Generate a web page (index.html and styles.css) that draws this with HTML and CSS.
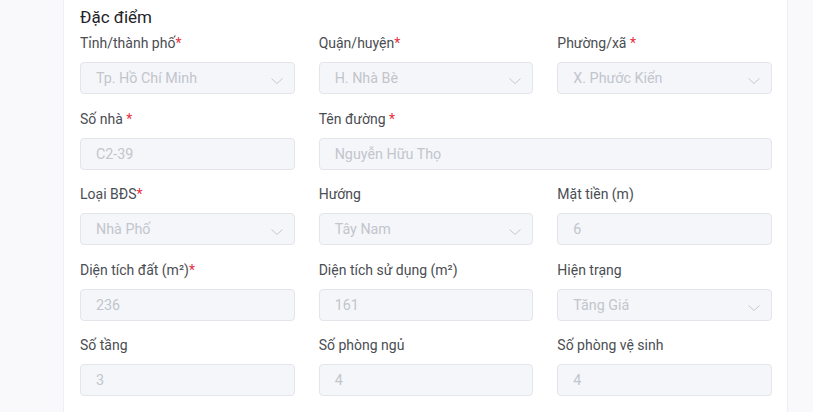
FILE: index.html
```html
<!DOCTYPE html>
<html lang="vi">
<head>
<meta charset="utf-8">
<title>Đặc điểm</title>
<link rel="stylesheet" href="styles.css">
</head>
<body>
<div class="page">
  <section class="card">
    <h2 class="title">Đặc điểm</h2>
    <div class="grid">
      <div class="field">
        <label class="label">Tỉnh/thành phố<span class="req">*</span></label>
        <div class="input select"><span class="val">Tp. Hồ Chí Minh</span><svg class="chev" viewBox="0 0 12 6"><path d="M0.5 0.5 L6 5.5 L11.5 0.5"/></svg></div>
      </div>
      <div class="field">
        <label class="label">Quận/huyện<span class="req">*</span></label>
        <div class="input select"><span class="val">H. Nhà Bè</span><svg class="chev" viewBox="0 0 12 6"><path d="M0.5 0.5 L6 5.5 L11.5 0.5"/></svg></div>
      </div>
      <div class="field">
        <label class="label">Phường/xã <span class="req">*</span></label>
        <div class="input select"><span class="val">X. Phước Kiển</span><svg class="chev" viewBox="0 0 12 6"><path d="M0.5 0.5 L6 5.5 L11.5 0.5"/></svg></div>
      </div>

      <div class="field">
        <label class="label">Số nhà <span class="req">*</span></label>
        <div class="input"><span class="val">C2-39</span></div>
      </div>
      <div class="field span2">
        <label class="label">Tên đường <span class="req">*</span></label>
        <div class="input"><span class="val">Nguyễn Hữu Thọ</span></div>
      </div>

      <div class="field">
        <label class="label">Loại BĐS<span class="req">*</span></label>
        <div class="input select"><span class="val">Nhà Phố</span><svg class="chev" viewBox="0 0 12 6"><path d="M0.5 0.5 L6 5.5 L11.5 0.5"/></svg></div>
      </div>
      <div class="field">
        <label class="label">Hướng</label>
        <div class="input select"><span class="val">Tây Nam</span><svg class="chev" viewBox="0 0 12 6"><path d="M0.5 0.5 L6 5.5 L11.5 0.5"/></svg></div>
      </div>
      <div class="field">
        <label class="label">Mặt tiền (m)</label>
        <div class="input"><span class="val">6</span></div>
      </div>

      <div class="field">
        <label class="label">Diện tích đất (m²)<span class="req">*</span></label>
        <div class="input"><span class="val">236</span></div>
      </div>
      <div class="field">
        <label class="label">Diện tích sử dụng (m²)</label>
        <div class="input"><span class="val">161</span></div>
      </div>
      <div class="field">
        <label class="label">Hiện trạng</label>
        <div class="input select"><span class="val">Tăng Giá</span><svg class="chev" viewBox="0 0 12 6"><path d="M0.5 0.5 L6 5.5 L11.5 0.5"/></svg></div>
      </div>

      <div class="field">
        <label class="label">Số tầng</label>
        <div class="input"><span class="val">3</span></div>
      </div>
      <div class="field">
        <label class="label">Số phòng ngủ</label>
        <div class="input"><span class="val">4</span></div>
      </div>
      <div class="field">
        <label class="label">Số phòng vệ sinh</label>
        <div class="input"><span class="val">4</span></div>
      </div>
    </div>
  </section>
</div>
</body>
</html>
```

FILE: styles.css
```css
* { box-sizing: border-box; }
html, body {
  margin: 0;
  padding: 0;
  height: 100%;
  background: #f9f9fb;
  font-family: Roboto, "Liberation Sans", Arial, sans-serif;
  overflow: hidden;
}
.page {
  padding-left: 63px;
  height: 100%;
}
.card {
  width: 725px;
  height: 100%;
  background: #ffffff;
  border-left: 1px solid #eeeff3;
  border-right: 1px solid #eeeff3;
  padding: 5px 15px 0 16px;
}
.title {
  margin: 0;
  font-size: 17px;
  line-height: 24px;
  font-weight: 400;
  color: #1f2328;
}
.grid {
  margin-top: 4px;
  display: grid;
  grid-template-columns: repeat(3, 1fr);
  column-gap: 24px;
  row-gap: 14.5px;
}
.span2 { grid-column: span 2; }
.field {
  display: flex;
  flex-direction: column;
}
.label {
  font-size: 14px;
  line-height: 20px;
  color: #4a4d52;
  margin-bottom: 9px;
}
.req { color: #e8303f; }
.input {
  height: 32px;
  border: 1px solid #e3e5ea;
  border-radius: 4px;
  background: #f5f6fa;
  padding: 0 11px 0 15px;
  display: flex;
  align-items: center;
  justify-content: space-between;
}
.val {
  font-size: 14.3px;
  line-height: 30px;
  color: #c2c5cc;
}
.chev {
  width: 12px;
  height: 6px;
  margin-top: 6px;
  fill: none;
  stroke: #c5c8cf;
  stroke-width: 1;
}
```
